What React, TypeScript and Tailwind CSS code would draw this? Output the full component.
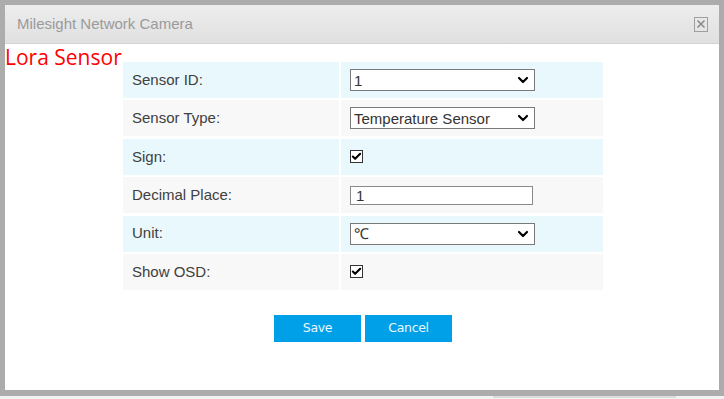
import { Check, ChevronDown } from 'lucide-react'

type Row = {
  label: string
  kind: 'select' | 'check' | 'input'
  value?: string
}

const rows: Row[] = [
  { label: 'Sensor ID:', kind: 'select', value: '1' },
  { label: 'Sensor Type:', kind: 'select', value: 'Temperature Sensor' },
  { label: 'Sign:', kind: 'check' },
  { label: 'Decimal Place:', kind: 'input', value: '1' },
  { label: 'Unit:', kind: 'select', value: '℃' },
  { label: 'Show OSD:', kind: 'check' },
]

function FakeSelect({ value }: { value: string }) {
  return (
    <div className="flex h-[22px] w-[185px] items-center justify-between border border-[#7a7a7a] bg-white pl-[3px] pr-[3px] text-[15px] leading-none text-[#333]">
      <span>{value}</span>
      <ChevronDown size={16} strokeWidth={3.2} className="text-black" />
    </div>
  )
}

function FakeCheck() {
  return (
    <div className="flex h-[13px] w-[13px] items-center justify-center border border-[#333] bg-white">
      <Check size={11} strokeWidth={4.5} className="text-black" />
    </div>
  )
}

export default function App() {
  return (
    <div className="flex h-[399px] w-[724px] flex-col overflow-hidden bg-[#f3f3f3] font-['Liberation_Sans',Arial,sans-serif]">
      <div className="h-[396px] w-[724px] bg-[#acacac] px-[5px] pb-[6px] pt-[5px]">
        <div className="relative flex h-full flex-col bg-white">
          <div className="flex h-[39px] shrink-0 items-center justify-between border-b border-[#d2d2d2] bg-gradient-to-b from-[#ededed] to-[#e0e0e0] pl-[12px] pr-[11px]">
            <span className="text-[15px] text-[#9a9a9a]">Milesight Network Camera</span>
            <div className="flex h-[15px] w-[14px] items-center justify-center border border-[#a0a0a0]">
              <svg width="10" height="10" viewBox="0 0 10 10">
                <path d="M1.5 1.5 L8.5 8.5 M8.5 1.5 L1.5 8.5" stroke="#8a8a8a" strokeWidth="1.6" />
              </svg>
            </div>
          </div>

          <span className="absolute left-0 top-[38px] font-['Open_Sans',sans-serif] text-[21px] leading-[28px] text-[#ff0000]">
            Lora Sensor
          </span>

          <div className="ml-[118px] mt-[18px] flex w-[480px] flex-col gap-[2.4px]">
            {rows.map((r, i) => (
              <div key={r.label} className="grid h-9 grid-cols-[216px_262px] gap-[2px]">
                <div
                  className={`flex items-center pl-[9px] text-[15px] text-[#404040] ${i % 2 === 0 ? 'bg-[#e9f8fd]' : 'bg-[#f8f8f8]'}`}
                >
                  {r.label}
                </div>
                <div
                  className={`flex items-center pl-[9px] ${i % 2 === 0 ? 'bg-[#e9f8fd]' : 'bg-[#f8f8f8]'}`}
                >
                  {r.kind === 'select' && <FakeSelect value={r.value ?? ''} />}
                  {r.kind === 'check' && <FakeCheck />}
                  {r.kind === 'input' && (
                    <div className="flex h-[19px] w-[183px] items-center border border-[#8a8a8a] bg-white pl-[5px] text-[15px] leading-none text-[#333]">
                      {r.value}
                    </div>
                  )}
                </div>
              </div>
            ))}
          </div>

          <div className="mt-[25px] flex justify-center gap-[4px] pl-[2px]">
            <button className="h-[27px] w-[87px] bg-[#00a0e8] font-['DejaVu_Sans',sans-serif] text-[12.5px] tracking-[-0.3px] text-[#eaf7ff]">
              Save
            </button>
            <button className="h-[27px] w-[87px] bg-[#00a0e8] font-['DejaVu_Sans',sans-serif] text-[12.5px] tracking-[-0.3px] text-[#eaf7ff]">
              Cancel
            </button>
          </div>
        </div>
      </div>
      <div className="flex flex-1 items-start">
        <div className="ml-[493px] h-[2px] w-[183px] bg-[#dcdcdc]" />
      </div>
    </div>
  )
}
